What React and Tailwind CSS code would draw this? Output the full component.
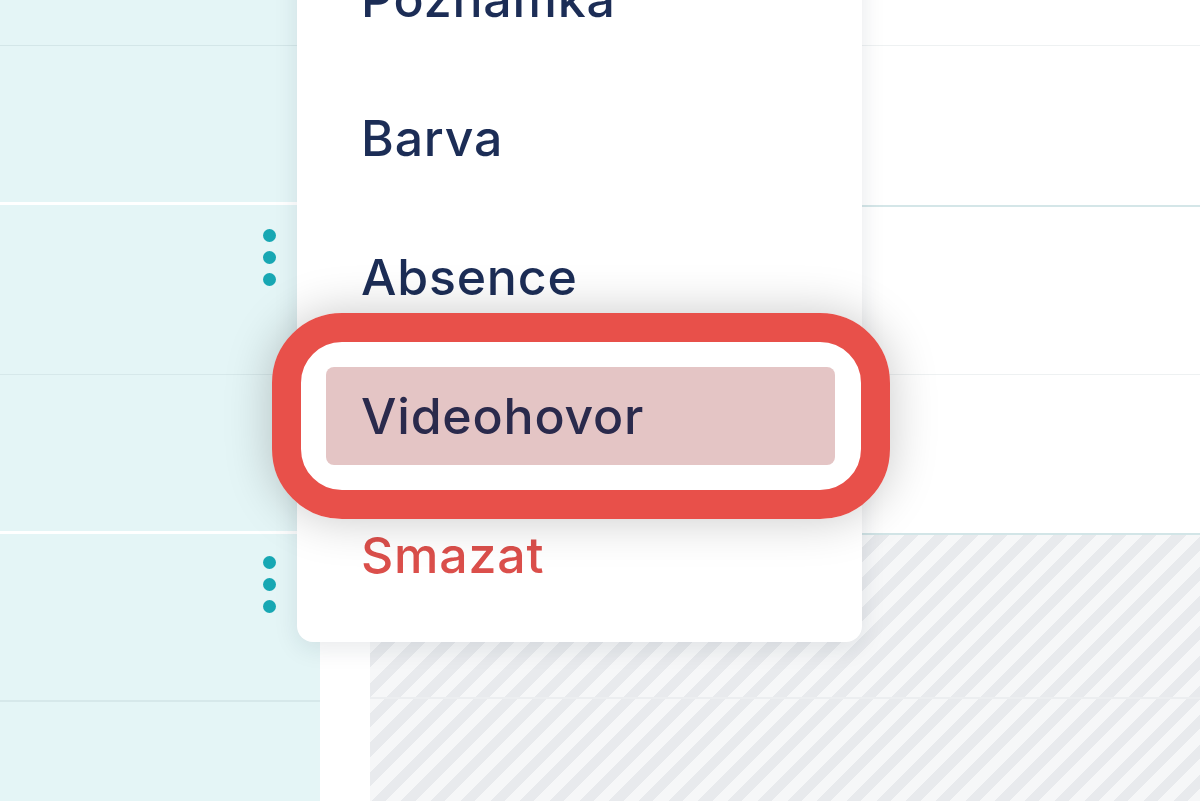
import React from 'react';

// context menu over a schedule grid, with an annotation ring round one item

const menuItems = [
  { label: 'Poznámka' },
  { label: 'Barva' },
  { label: 'Absence' },
  { label: 'Videohovor', active: true },
  { label: 'Smazat', danger: true },
];

const hatch =
  'bg-[repeating-linear-gradient(135deg,#e8eaed_0px,#e8eaed_10px,#f6f7f8_10px,#f6f7f8_21px)]';

const Dots = () => (
  <div className="flex flex-col gap-[9px]">
    <div className="w-[13px] h-[13px] rounded-full bg-[#17a7b3]" />
    <div className="w-[13px] h-[13px] rounded-full bg-[#17a7b3]" />
    <div className="w-[13px] h-[13px] rounded-full bg-[#17a7b3]" />
  </div>
);

const App = () => {
  return (
    <div
      className="relative w-[1200px] h-[801px] overflow-hidden bg-white"
      style={{ fontFamily: 'Inter, "Noto Sans", sans-serif' }}
    >
      <div className="flex h-full">
        {/* left column */}
        <div className="w-[320px] flex flex-col bg-[#e4f5f6]">
          <div className="h-[46px] border-b border-[#d3e6e8]" />
          <div className="h-[159px] border-b-[3px] border-white" />
          <div className="h-[170px] border-b border-[#d6e8ea] flex justify-end pr-[44px] pt-[24px]">
            <Dots />
          </div>
          <div className="h-[159px] border-b-[3px] border-white" />
          <div className="h-[168px] border-b-2 border-[#d6e8ea] flex justify-end pr-[44px] pt-[22px]">
            <Dots />
          </div>
          <div className="flex-1" />
        </div>

        {/* right column */}
        <div className="flex-1 flex flex-col">
          <div className="h-[46px] border-b border-[#eef1f2]" />
          <div className="h-[161px] border-b-2 border-[#d4e6e8]" />
          <div className="h-[168px] border-b border-[#eef1f2]" />
          <div className="h-[160px] border-b-2 border-[#d2e5e7]" />
          <div className="flex-1 flex pl-[50px]">
            <div className={`flex-1 flex flex-col ${hatch}`}>
              <div className="h-[164px] border-b-2 border-[#eceef0]" />
              <div className="flex-1" />
            </div>
          </div>
        </div>
      </div>

      {/* context menu */}
      <div className="absolute left-[297px] top-[-71px] w-[565px] pb-[18px] rounded-[16px] bg-white shadow-[0_6px_24px_rgba(20,40,60,0.10)]">
        {menuItems.map((item) => (
          <div key={item.label} className="h-[139px] flex items-center pl-[29px] pr-[27px]">
            <div
              className={`w-full h-[98px] flex items-center pl-[35px] rounded-[8px] text-[50px] leading-none font-medium tracking-[0.8px] ${
                item.active ? 'bg-[#e4c5c5] text-[#2a2a4c]' : item.danger ? 'text-[#db4f4b]' : 'text-[#1c2d56]'
              }`}
            >
              {item.label}
            </div>
          </div>
        ))}
      </div>

      {/* annotation ring */}
      <div className="absolute left-[272px] top-[313px] w-[618px] h-[206px] rounded-[70px] border-[29px] border-[#e8504a] shadow-[0_0_48px_rgba(0,0,0,0.22)]" />
    </div>
  );
};

export default App;
